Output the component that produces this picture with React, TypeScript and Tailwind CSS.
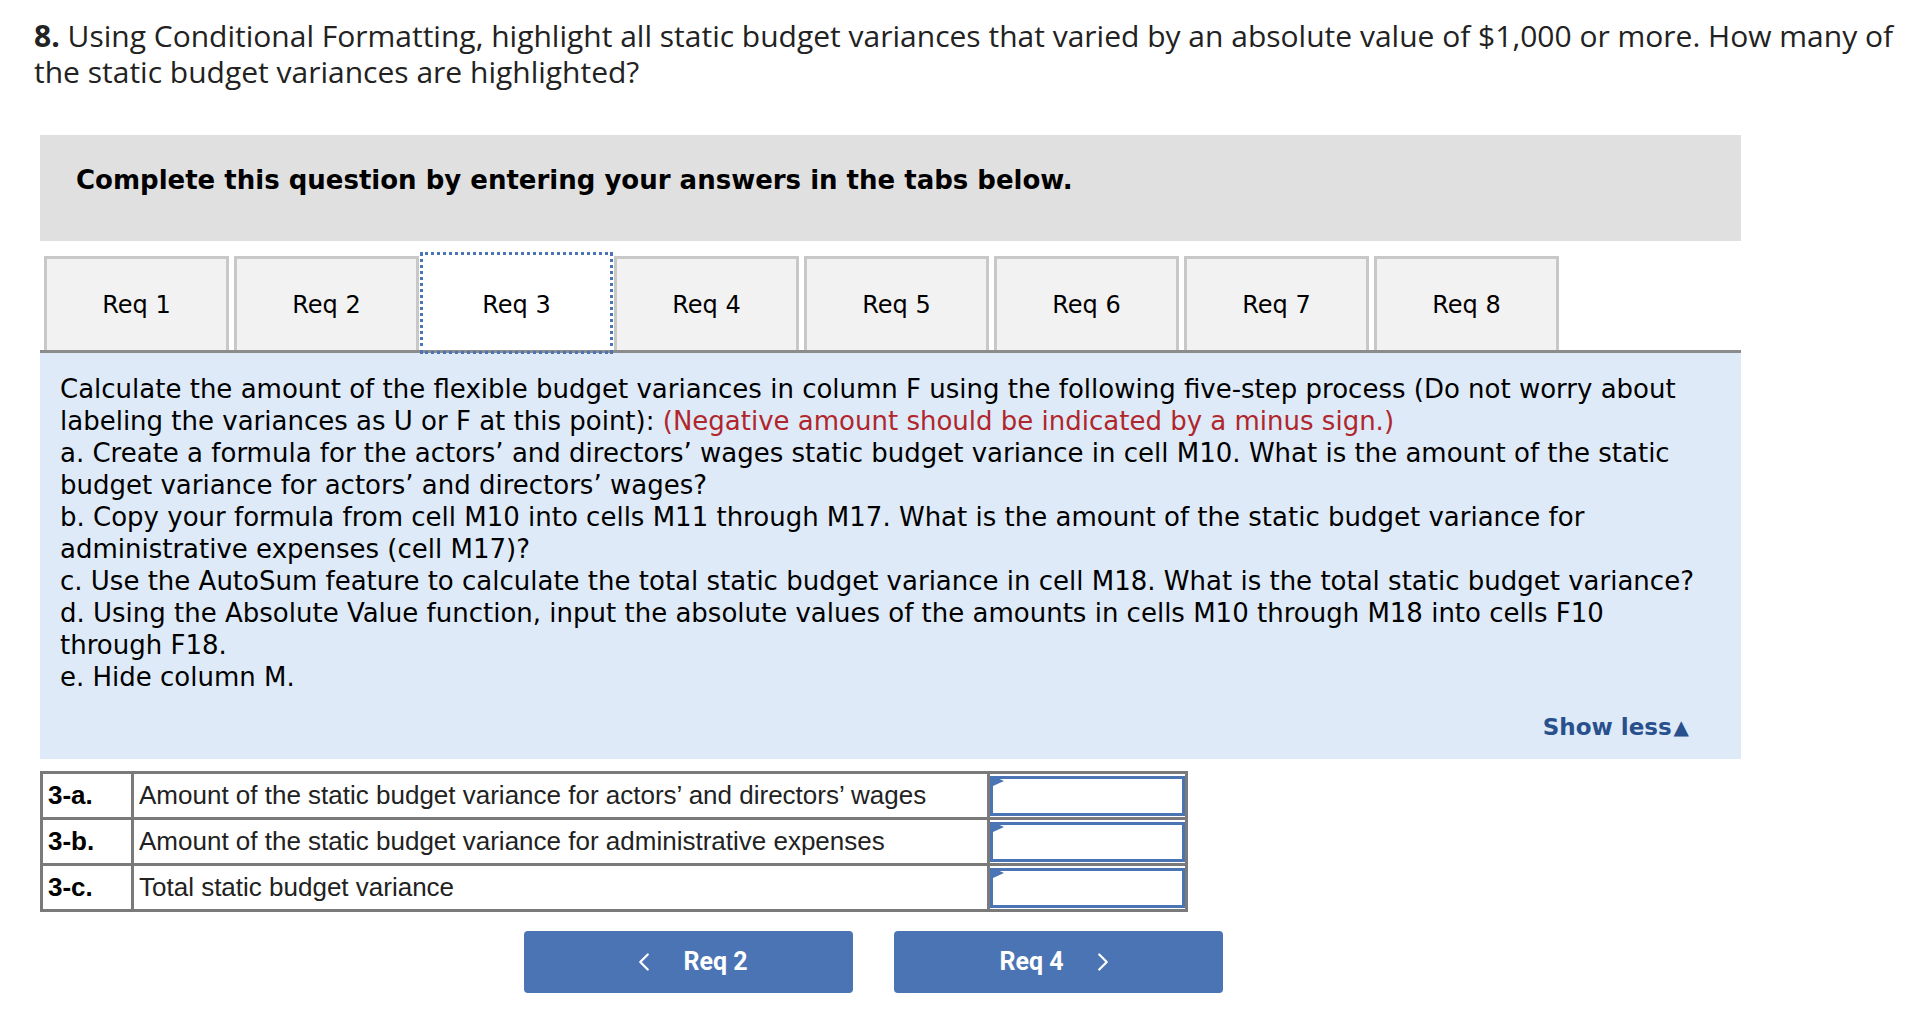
import { ChevronLeft, ChevronRight } from "lucide-react";

const tabs = ["Req 1", "Req 2", "Req 3", "Req 4", "Req 5", "Req 6", "Req 7", "Req 8"];

const rows = [
  { id: "3-a.", label: "Amount of the static budget variance for actors’ and directors’ wages" },
  { id: "3-b.", label: "Amount of the static budget variance for administrative expenses" },
  { id: "3-c.", label: "Total static budget variance" },
];

const verdana = "font-['Verdana','DejaVu_Sans',sans-serif]";

export default function App() {
  return (
    <div className="min-h-[1014px] bg-white pl-[34px] pt-[18px] text-[#1a1a1a]">
      {/* Question */}
      <p className="w-[1884px] font-['Open_Sans','Lato',sans-serif] text-[30px] leading-[36px] text-[#222]">
        <span className="font-bold">8.</span> Using Conditional Formatting, highlight all static budget variances that
        varied by an absolute value of $1,000 or more. How many of the static budget variances are highlighted?
      </p>

      <div className="ml-[6px] mt-[45px] w-[1701px]">
        {/* Instruction bar */}
        <div className={`flex h-[106px] items-start bg-[#e0e0e0] pl-[36px] pt-[26px] ${verdana}`}>
          <span className="text-[26px] font-bold text-black">
            Complete this question by entering your answers in the tabs below.
          </span>
        </div>

        {/* Tabs */}
        <div className={`mt-[15px] flex gap-[5px] border-b-[3px] border-[#8c8c8c] pl-[4px] ${verdana}`}>
          {tabs.map((t) => (
            <div
              key={t}
              className={
                t === "Req 3"
                  ? "relative flex h-[94px] w-[185px] items-center justify-center border-[3px] border-b-0 border-white bg-white text-[24px] text-black outline-dotted outline-[3px] outline-offset-[1px] outline-[#4a74b4]"
                  : "flex h-[94px] w-[185px] items-center justify-center border-[3px] border-b-0 border-[#c8c8c8] bg-[#f2f2f2] text-[24px] text-black"
              }
            >
              {t}
            </div>
          ))}
        </div>

        {/* Description */}
        <div className={`bg-[#deeaf7] pb-[16px] pl-[20px] pr-[30px] pt-[20px] text-[26px] leading-[32px] text-black ${verdana}`}>
          <p>
            Calculate the amount of the flexible budget variances in column F using the following five-step process (Do
            not worry about labeling the variances as U or F at this point):{" "}
            <span className="text-[#b0262c]">(Negative amount should be indicated by a minus sign.)</span>
          </p>
          <p>
            a. Create a formula for the actors’ and directors’ wages static budget variance in cell M10. What is the
            amount of the static budget variance for actors’ and directors’ wages?
          </p>
          <p>
            b. Copy your formula from cell M10 into cells M11 through M17. What is the amount of the static budget
            variance for administrative expenses (cell M17)?
          </p>
          <p>
            c. Use the AutoSum feature to calculate the total static budget variance in cell M18. What is the total
            static budget variance?
          </p>
          <p>
            d. Using the Absolute Value function, input the absolute values of the amounts in cells M10 through M18
            into cells F10 through F18.
          </p>
          <p>e. Hide column M.</p>
          <div className="mt-[18px] flex justify-end pr-[22px]">
            <span className="flex items-center gap-[2px] text-[23px] font-bold text-[#28508c]">
              Show less
              <span className="text-[20px]">▲</span>
            </span>
          </div>
        </div>
      </div>

      {/* Answer table */}
      <table className="ml-[6px] mt-[12px] border-collapse font-['Liberation_Sans','Arial',sans-serif] text-[26px] text-[#222]">
        <tbody>
          {rows.map((r) => (
            <tr key={r.id} className="h-[46px]">
              <td className="w-[91px] border-[3px] border-[#7a7a7a] pl-[5px] font-bold text-black">{r.id}</td>
              <td className="w-[856px] border-[3px] border-[#7a7a7a] pl-[5px]">{r.label}</td>
              <td className="w-[198px] border-[3px] border-[#7a7a7a] p-0">
                <div className="relative h-[40px] w-full border-[3px] border-[#4a74b4] bg-white">
                  <div className="absolute left-0 top-[-3px] h-0 w-0 border-b-[5px] border-l-[11px] border-t-[5px] border-b-transparent border-l-[#4a74b4] border-t-transparent" />
                </div>
              </td>
            </tr>
          ))}
        </tbody>
      </table>

      {/* Navigation */}
      <div className="ml-[490px] mt-[19px] flex gap-[41px] font-['Roboto','Liberation_Sans',sans-serif] text-[25px] font-bold text-white">
        <button className="flex h-[62px] w-[329px] items-center justify-center gap-[24px] rounded-[4px] bg-[#4a74b3]">
          <ChevronLeft className="h-[30px] w-[30px]" strokeWidth={1.8} />
          <span>Req 2</span>
        </button>
        <button className="flex h-[62px] w-[329px] items-center justify-center gap-[24px] rounded-[4px] bg-[#4a74b3]">
          <span>Req 4</span>
          <ChevronRight className="h-[30px] w-[30px]" strokeWidth={1.8} />
        </button>
      </div>
    </div>
  );
}
